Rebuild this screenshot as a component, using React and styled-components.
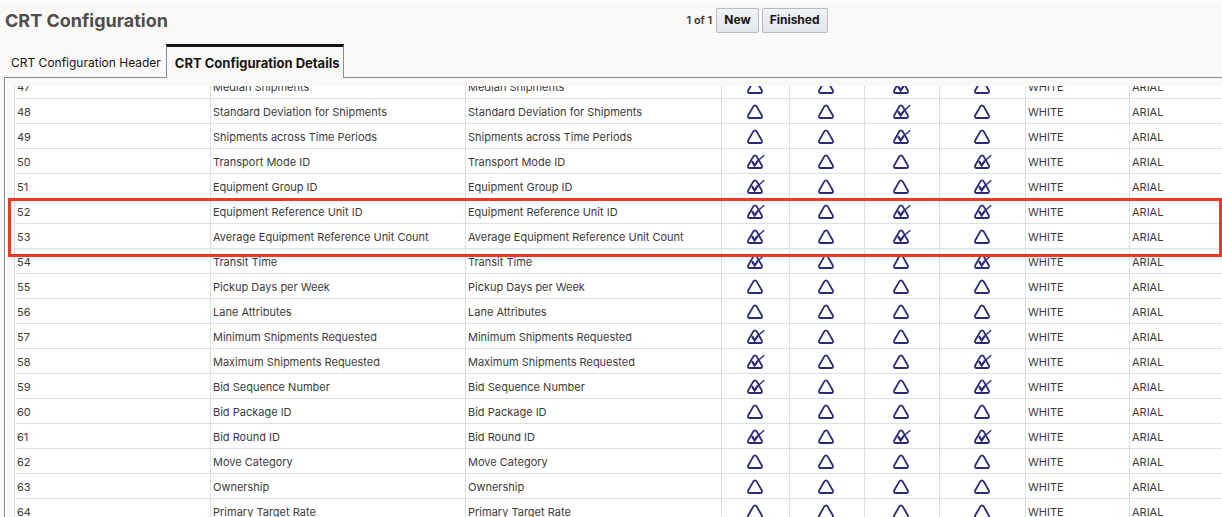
import React from "react";
import styled, { createGlobalStyle } from "styled-components";

const GlobalStyle = createGlobalStyle`
  * { box-sizing: border-box; }
  body {
    margin: 0;
    background: #faf9f8;
    color: #3c3b3a;
    font-family: Inter, "Liberation Sans", sans-serif;
    font-size: 11px;
  }
`;

const Page = styled.div`
  display: flex;
  flex-direction: column;
  height: 100vh;
  overflow: hidden;
  border-top: 1px solid #fff;
`;

const Header = styled.header`
  display: grid;
  grid-template-columns: 1fr auto 1fr;
  align-items: center;
  height: 43px;
  padding: 0 5px 5px;
  flex: none;
`;

const Title = styled.h1`
  margin: 0;
  padding-top: 1px;
  font-size: 18px;
  line-height: 24px;
  font-weight: 700;
  color: #504e4c;
`;

const Actions = styled.div`
  display: flex;
  align-items: center;
  gap: 3px;
  padding-left: 292px;
`;

const Count = styled.span`
  font-weight: 600;
  font-size: 11px;
  padding-right: 1px;
`;

const Button = styled.button`
  height: 25px;
  padding: 0 7px;
  border: 1px solid #b8bcc0;
  border-radius: 2px;
  background: linear-gradient(#f0f2f4, #e2e6ea);
  font: 700 12px/16px Inter, "Liberation Sans", sans-serif;
  color: #161513;
`;

const Tabs = styled.nav`
  display: flex;
  flex: none;
  height: 34px;
  &::before {
    content: "";
    width: 4px;
  }
  &::after {
    content: "";
    flex: 1;
    border-bottom: 1px solid #8f8d8b;
  }
`;

const Tab = styled.a`
  display: flex;
  align-items: center;
  padding: ${(p) => (p.$active ? "0 4px 0 8px" : "4px 5px 0 7px")};
  border: solid #8f8d8b;
  border-width: ${(p) => (p.$active ? "3px 1px 0" : "0 0 1px")};
  border-top-color: #161513;
  font-size: ${(p) => (p.$active ? "13px" : "12px")};
  font-weight: ${(p) => (p.$active ? 700 : 400)};
  color: #161513;
  text-decoration: none;
  white-space: nowrap;
`;

const Panel = styled.main`
  flex: 1;
  min-height: 0;
  display: flex;
  margin-left: 4px;
  padding-top: 8px;
  border-left: 1px solid #8f8d8b;
`;

const Scroller = styled.div`
  flex: 1;
  min-width: 0;
  overflow: hidden;
`;

const Sheet = styled.div`
  position: relative;
  margin-top: -12px;
  padding-left: 9px;
`;

const Table = styled.table`
  width: 100%;
  table-layout: fixed;
  border-collapse: separate;
  border-spacing: 0;
  background: #fff;
  border-left: 1px solid #d5dde6;
`;

const Cell = styled.td`
  height: 25px;
  padding: ${(p) => (p.$center ? "0 3px 0 1px" : "1px 2px 0")};
  line-height: 16px;
  white-space: nowrap;
  vertical-align: middle;
  text-align: ${(p) => (p.$center ? "center" : "left")};
  border: solid #d8e0e8;
  border-width: 0 1px 1px 0;
  &:last-child { border-right: 0; }
`;

const Mark = styled.span`
  display: inline-block;
  position: relative;
  width: 16px;
  height: 16px;
  vertical-align: middle;

  input {
    appearance: none;
    position: absolute;
    inset: 0;
    margin: 0;
  }
  svg {
    display: block;
    overflow: visible;
    pointer-events: none;
  }
  .tick { visibility: hidden; }
  input:checked + svg .tick { visibility: visible; }
`;

const Highlight = styled.div`
  position: absolute;
  top: 124px;
  left: 3px;
  right: 0;
  height: 59px;
  border: 3px solid #ee3a24;
  pointer-events: none;
`;

const columns = [196, 255, 256, 68, 75, 75, 86, 104];

const rows = [
  ["47", "Median Shipments", "0010"],
  ["48", "Standard Deviation for Shipments", "0010"],
  ["49", "Shipments across Time Periods", "0010"],
  ["50", "Transport Mode ID", "1001"],
  ["51", "Equipment Group ID", "1001"],
  ["52", "Equipment Reference Unit ID", "1011"],
  ["53", "Average Equipment Reference Unit Count", "1010"],
  ["54", "Transit Time", "1001"],
  ["55", "Pickup Days per Week", "0000"],
  ["56", "Lane Attributes", "0000"],
  ["57", "Minimum Shipments Requested", "1001"],
  ["58", "Maximum Shipments Requested", "1001"],
  ["59", "Bid Sequence Number", "1001"],
  ["60", "Bid Package ID", "0000"],
  ["61", "Bid Round ID", "1011"],
  ["62", "Move Category", "0000"],
  ["63", "Ownership", "0000"],
  ["64", "Primary Target Rate", "0000"],
];

function TriangleCheck({ label, checked }) {
  return (
    <Mark>
      <input type="checkbox" aria-label={label} defaultChecked={checked} />
      <svg width="16" height="16" viewBox="0 0 16 16" fill="none" stroke="#2b2a78" aria-hidden="true">
        <path
          d="M6.2 2.600Q8 .2 9.800 2.600L14.700 11.200Q15.800 14 13.200 14H2.800Q.2 14 1.300 11.200Z"
          strokeWidth="1.800"
          strokeLinejoin="round"
        />
        <path className="tick" d="M5 7.200 7.600 11.400 10.800 6.800" strokeWidth="2.200" />
        <path className="tick" d="M10.400 7.200 17.200 1.200" strokeWidth="1.400" />
      </svg>
    </Mark>
  );
}

export default function App() {
  return (
    <>
      <GlobalStyle />
      <Page>
        <Header>
          <Title>CRT Configuration</Title>
          <Actions>
            <Count>1 of 1</Count>
            <Button type="button">New</Button>
            <Button type="button">Finished</Button>
          </Actions>
        </Header>
        <Tabs>
          <Tab href="#header">CRT Configuration Header</Tab>
          <Tab href="#details" $active aria-current="page">CRT Configuration Details</Tab>
        </Tabs>
        <Panel>
          <Scroller>
            <Sheet>
              <Table>
                <colgroup>
                  {columns.map((width, i) => <col key={i} width={width} />)}
                  <col />
                </colgroup>
                <tbody>
                  {rows.map(([id, name, flags]) => (
                    <tr key={id}>
                      <Cell>{id}</Cell>
                      <Cell>{name}</Cell>
                      <Cell>{name}</Cell>
                      {[...flags].map((flag, i) => (
                        <Cell key={i} $center>
                          <TriangleCheck label={`${name} option ${i + 1}`} checked={flag === "1"} />
                        </Cell>
                      ))}
                      <Cell>WHITE</Cell>
                      <Cell>ARIAL</Cell>
                    </tr>
                  ))}
                </tbody>
              </Table>
              <Highlight />
            </Sheet>
          </Scroller>
        </Panel>
      </Page>
    </>
  );
}
